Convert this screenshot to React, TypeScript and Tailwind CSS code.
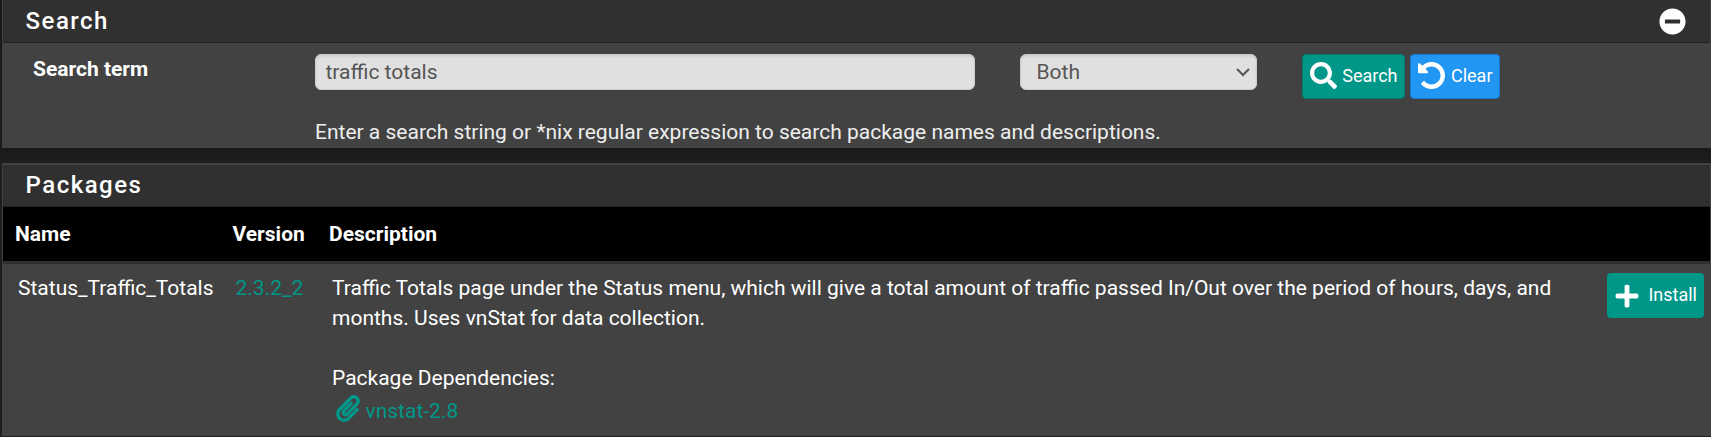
import React from "react";
import { FaSearch, FaPlus, FaPaperclip, FaMinusCircle } from "react-icons/fa";

function Heading({ title, collapsible }: { title: string; collapsible?: boolean }) {
  return (
    <div className="flex h-full items-start justify-between border-b border-[#212121] bg-[#303030] pl-[22.5px] pr-[24px]">
      <h2 className="text-[24px] font-medium leading-[26px] tracking-[1.5px] text-white">{title}</h2>
      {collapsible && <FaMinusCircle className="size-[27px] text-white" />}
    </div>
  );
}

function UndoIcon() {
  return (
    <svg viewBox="128 128 1536 1536" className="size-[27px]" fill="currentColor">
      <path d="M1664 896q0 156-61 298t-164 245-245 164-298 61q-172 0-327-72.5t-264-204.5q-7-10-6.5-22.5t8.5-20.5l137-138q10-9 25-9 16 2 23 12 73 95 179 147t225 52q104 0 198.5-40.5t163.5-109.5 109.5-163.5 40.5-198.5-40.5-198.5-109.5-163.5-163.5-109.5-198.5-40.5q-98 0-188 35.5t-160 101.5l137 138q31 30 14 69-17 40-59 40h-448q-26 0-45-19t-19-45v-448q0-42 40-59 39-17 69 14l130 129q107-101 244.5-156.5t284.5-55.5q156 0 298 61t245 164 164 245 61 298z" />
    </svg>
  );
}

export default function App() {
  return (
    <div className="h-[437px] w-full overflow-hidden bg-[#1e1e1e] pl-[2px] font-[Roboto,sans-serif] text-[21px] leading-[30px] text-white">
      <section className="h-[148px] border-x border-[#424242] bg-[#424242] shadow-[0_2px_8px_rgba(0,0,0,0.35)]">
        <div className="h-[43px] bg-[#303030] pt-[8px]">
          <Heading title="Search" collapsible />
        </div>
        <div className="flex items-start pt-[11px]">
          <label className="w-[312px] shrink-0 pl-[30px] font-bold">Search term</label>
          <div className="w-[705px]">
            <div className="flex">
              <input
                defaultValue="traffic totals"
                className="h-[36px] w-[660px] rounded-[6px] border border-[#cccccc] bg-[#e0e0e0] px-[9.5px] text-[21px] text-[#555555] shadow-[inset_0_2px_2px_rgba(0,0,0,0.075)]"
              />
            </div>
            <p className="mt-[27px] whitespace-nowrap text-[#eeeeee]">
              Enter a search string or *nix regular expression to search package names and descriptions.
            </p>
          </div>
          <div className="flex h-[36px] w-[237px] items-center justify-between rounded-[6px] border border-[#cccccc] bg-[#e0e0e0] pl-[15.5px] pr-[6px] text-[#555555] shadow-[inset_0_2px_2px_rgba(0,0,0,0.075)]">
            <span>Both</span>
            <svg viewBox="0 0 14 9" className="h-[9px] w-[14px]" fill="none" stroke="currentColor" strokeWidth="2">
              <path d="M1 1l6 6 6-6" />
            </svg>
          </div>
          <button className="ml-[45px] flex h-[45px] w-[103px] items-center justify-between rounded-[4px] border border-[#00796b] bg-[#009688] pb-[2px] pl-[6.5px] pr-[6.5px] text-[18px]">
            <FaSearch className="size-[27px]" />
            <span>Search</span>
          </button>
          <button className="ml-[5px] flex h-[45px] w-[90px] items-center justify-between rounded-[4px] border border-[#1976d2] bg-[#2196f3] pb-[2px] pl-[7px] pr-[6.5px] text-[18px]">
            <UndoIcon />
            <span>Clear</span>
          </button>
        </div>
      </section>

      <section className="mt-[15px] h-[273px] border-x border-t-2 border-[#424242] bg-[#424242]">
        <div className="h-[42px] bg-[#303030] pt-[7px]">
          <Heading title="Packages" />
        </div>
        <table className="w-full table-fixed border-separate border-spacing-0">
          <colgroup>
            <col className="w-[217px]" />
            <col className="w-[97px]" />
            <col />
            <col className="w-[103px]" />
          </colgroup>
          <thead>
            <tr className="bg-black text-left">
              <th className="h-[57px] border-b-3 border-[#303030] pl-[12px]">Name</th>
              <th className="border-b-3 border-[#303030] pl-[12.5px]">Version</th>
              <th className="border-b-3 border-[#303030] pl-[12px]">Description</th>
              <th className="border-b-3 border-[#303030]" />
            </tr>
          </thead>
          <tbody>
            <tr className="align-top">
              <td className="pl-[15px] pt-[9px]">Status_Traffic_Totals</td>
              <td className="pl-[15.5px] pt-[9px] text-[#009688]">2.3.2_2</td>
              <td className="pl-[15px] pr-[20px] pt-[9px]">
                <p>
                  Traffic Totals page under the Status menu, which will give a total amount of traffic passed In/Out over the period of hours, days, and months. Uses vnStat for data collection.
                </p>
                <p className="mt-[30px]">Package Dependencies:</p>
                <a className="flex items-center pl-[4px] pt-[2px] text-[#009688]">
                  <FaPaperclip className="mb-[4px] mr-[5.5px] h-[27px] w-[24px]" />
                  vnstat-2.8
                </a>
              </td>
              <td className="pt-[9px]">
                <button className="flex h-[45px] w-[97px] items-center justify-between rounded-[4px] bg-[#009688] px-[7px] pb-px text-[18px]">
                  <FaPlus className="mt-px size-[26px]" />
                  <span>Install</span>
                </button>
              </td>
            </tr>
          </tbody>
        </table>
      </section>
    </div>
  );
}
